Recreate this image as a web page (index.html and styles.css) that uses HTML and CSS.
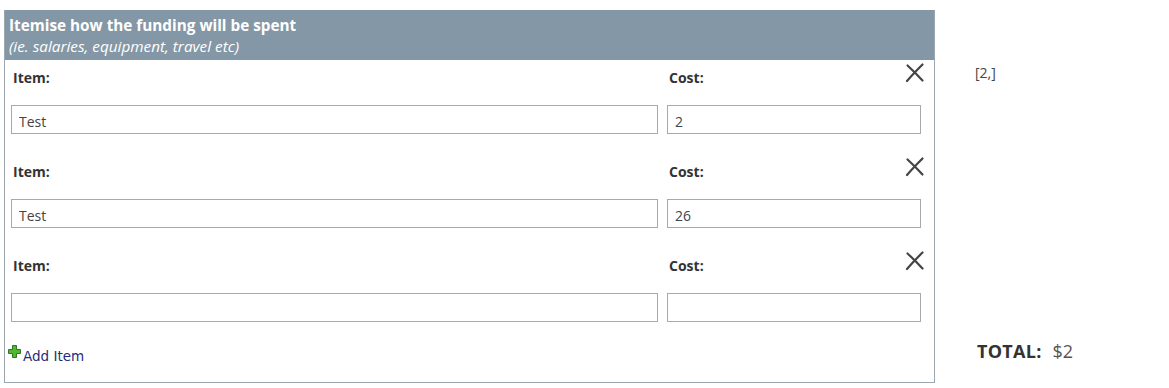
FILE: index.html
```html
<!DOCTYPE html>
<html lang="en">
<head>
  <meta charset="UTF-8">
  <title>Funding Items</title>
  <link rel="stylesheet" href="styles.css">
</head>
<body>
  <div class="page">
    <div class="panel">
      <div class="panel-head">
        <div class="head-title">Itemise how the funding will be spent</div>
        <div class="head-note">(ie. salaries, equipment, travel etc)</div>
      </div>
      <div class="items">
        <div class="item-row">
          <label class="field-label">Item:</label>
          <label class="field-label">Cost:</label>
          <input type="text" class="field" value="Test">
          <input type="text" class="field" value="2">
          <button class="remove" title="Remove">
            <svg width="20" height="20" viewBox="0 0 20 20"><path d="M2.5 2.5 C8 7.5 12 11.5 17.5 17.5" /><path d="M17.5 1.5 C13 6 8 11 2 18" /></svg>
          </button>
        </div>
        <div class="item-row">
          <label class="field-label">Item:</label>
          <label class="field-label">Cost:</label>
          <input type="text" class="field" value="Test">
          <input type="text" class="field" value="26">
          <button class="remove" title="Remove">
            <svg width="20" height="20" viewBox="0 0 20 20"><path d="M2.5 2.5 C8 7.5 12 11.5 17.5 17.5" /><path d="M17.5 1.5 C13 6 8 11 2 18" /></svg>
          </button>
        </div>
        <div class="item-row">
          <label class="field-label">Item:</label>
          <label class="field-label">Cost:</label>
          <input type="text" class="field" value="">
          <input type="text" class="field" value="">
          <button class="remove" title="Remove">
            <svg width="20" height="20" viewBox="0 0 20 20"><path d="M2.5 2.5 C8 7.5 12 11.5 17.5 17.5" /><path d="M17.5 1.5 C13 6 8 11 2 18" /></svg>
          </button>
        </div>
      </div>
      <a href="#" class="add-item">
        <svg width="13" height="13" viewBox="0 0 13 13"><path d="M4.5 0.5h4v4h4v4h-4v4h-4v-4h-4v-4h4z" /></svg>
        <span>Add Item</span>
      </a>
    </div>
    <div class="side">
      <div class="debug">[2,]</div>
      <div class="total"><strong>TOTAL:</strong> $2</div>
    </div>
  </div>
</body>
</html>
```

FILE: styles.css
```css
body {
  margin: 0;
  font-family: "Open Sans", Arial, sans-serif;
  color: #333;
  background: #fff;
}
.page {
  display: flex;
  padding: 10px 0 0 4px;
}
.panel {
  width: 929px;
  border: 1px solid #9ba6ae;
  border-top: none;
}
.panel-head {
  background-color: #8497a6;
  color: #fff;
  padding: 4px 4px 2px;
  height: 44px;
  font-size: 15.3px;
  line-height: 22px;
}
.head-title {
  font-weight: bold;
}
.head-note {
  font-style: italic;
  margin-top: -1px;
}
.item-row {
  position: relative;
  display: grid;
  grid-template-columns: 647px 254px;
  column-gap: 9px;
  row-gap: 17px;
  padding: 8px 0 20px 6px;
}
.field-label {
  font-size: 14px;
  font-weight: bold;
  line-height: 20px;
  padding-left: 2px;
}
.field {
  height: 29px;
  box-sizing: border-box;
  border: 1px solid #a9a9a9;
  padding: 3px 7px 0;
  font-family: "Open Sans", Arial, sans-serif;
  font-size: 14px;
  color: #444;
  outline: none;
}
.remove {
  position: absolute;
  top: 3px;
  right: 9px;
  padding: 0;
  border: none;
  background: none;
  cursor: pointer;
}
.remove svg {
  display: block;
}
.remove path {
  fill: none;
  stroke: #444;
  stroke-width: 2.2;
  stroke-linecap: round;
}
.add-item {
  display: flex;
  align-items: flex-start;
  gap: 2px;
  padding: 3px 0 18px 3px;
  font-family: "DejaVu Sans", Verdana, sans-serif;
  font-size: 13.5px;
  line-height: 16px;
  color: #1f2d7a;
  text-decoration: none;
}
.add-item svg {
  display: block;
}
.add-item span {
  padding-top: 3px;
}
.add-item path {
  fill: #55b531;
  stroke: #2d7a1e;
  stroke-width: 1;
}
.side {
  display: flex;
  flex-direction: column;
  margin-left: 40px;
  padding: 53px 0 20px;
}
.debug {
  font-size: 14px;
  line-height: 20px;
  color: #444;
}
.total {
  margin-top: auto;
  margin-left: 2px;
  font-size: 18px;
  line-height: 24px;
  color: #555;
  word-spacing: 6px;
}
.total strong {
  color: #333;
  letter-spacing: 0.3px;
}
```
